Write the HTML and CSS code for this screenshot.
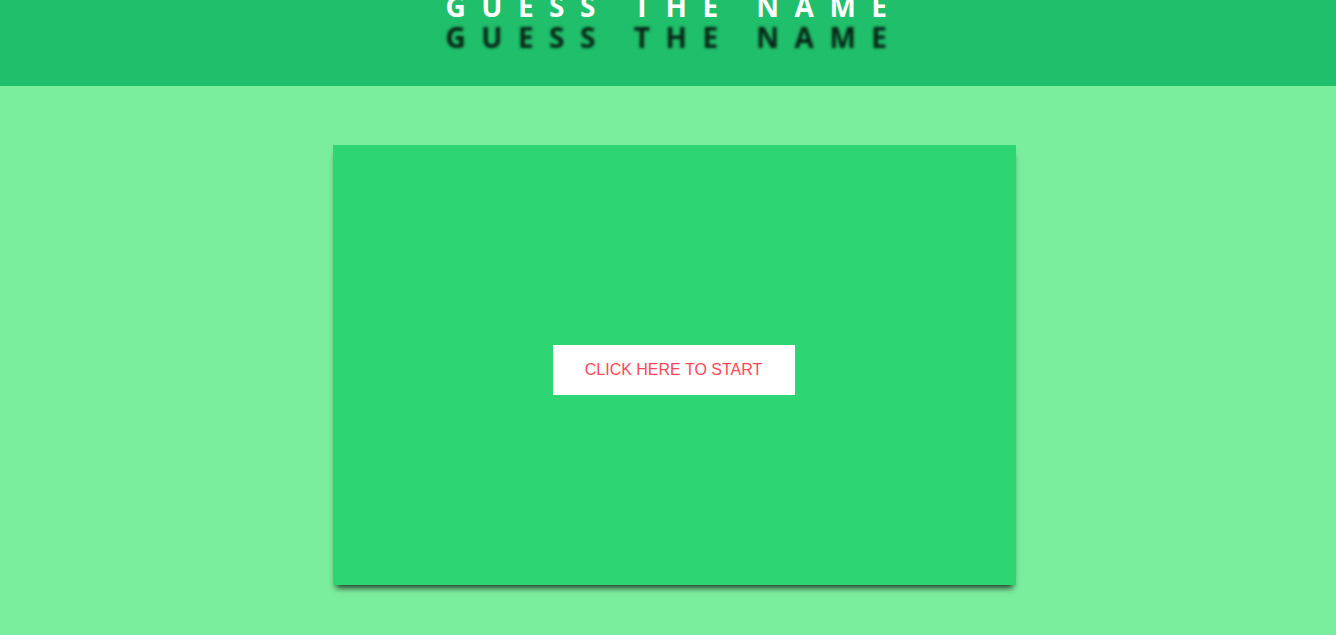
FILE: index.html
```html
<!DOCTYPE html>
<html lang="en">
<head>
<meta charset="utf-8">
<title>Guess the name</title>
<link rel="stylesheet" href="styles.css">
</head>
<body>
<header class="top">
  <h1 class="title">GUESS THE NAME</h1>
</header>
<main class="stage">
  <section class="card">
    <button class="start">CLICK HERE TO START</button>
  </section>
</main>
</body>
</html>
```
FILE: styles.css
```css
html, body {
  margin: 0;
  padding: 0;
}
body {
  background: #7bed9f;
  min-height: 635px;
  font-family: "Liberation Sans", Arial, sans-serif;
  overflow: hidden;
}
.top {
  height: 86px;
  background: #20bf6b;
  display: flex;
  justify-content: center;
  overflow: hidden;
}
.title {
  margin: -13px 0 0 12px;
  font-family: "Open Sans", sans-serif;
  font-weight: 700;
  font-size: 28px;
  line-height: 38px;
  letter-spacing: 15.5px;
  color: #ffffff;
  text-shadow: 0 31px 3px rgba(0, 0, 0, 0.8);
}
.stage {
  padding-top: 59px;
  padding-left: 333px;
}
.card {
  width: 683px;
  height: 440px;
  background: #2ed573;
  box-shadow: 0 6px 6px -3px rgba(0, 0, 0, 0.75);
  display: flex;
  align-items: center;
  justify-content: center;
  box-sizing: border-box;
  padding-top: 10px;
  padding-right: 2px;
}
.start {
  width: 242px;
  height: 50px;
  border: none;
  background: #ffffff;
  color: #ff4757;
  font-family: "Liberation Sans", Arial, sans-serif;
  font-size: 16px;
  padding: 0;
  cursor: pointer;
}
```
